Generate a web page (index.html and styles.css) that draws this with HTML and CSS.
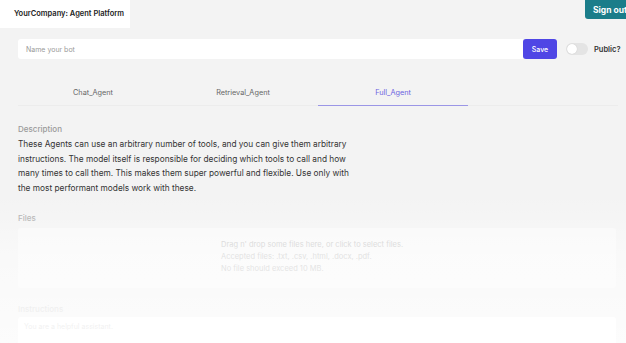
FILE: index.html
```html
<!DOCTYPE html>
<html>
<head>
<meta charset="utf-8">
<link rel="stylesheet" href="styles.css">
</head>
<body>
<div class="page">
  <header class="topbar">
    <div class="brand">YourCompany: Agent Platform</div>
    <button class="signout">Sign out</button>
  </header>
  <div class="namerow">
    <div class="namefield">
      <input class="nameinput" placeholder="Name your bot">
      <button class="save">Save</button>
    </div>
    <div class="toggle"><span class="knob"></span></div>
    <span class="public">Public?</span>
  </div>
  <nav class="tabs">
    <div class="tab">Chat_Agent</div>
    <div class="tab">Retrieval_Agent</div>
    <div class="tab active">Full_Agent</div>
  </nav>
  <section class="content">
    <div class="label">Description</div>
    <p class="desc">These Agents can use an arbitrary number of tools, and you can give them arbitrary instructions. The model itself is responsible for deciding which tools to call and how many times to call them. This makes them super powerful and flexible. Use only with the most performant models work with these.</p>
    <div class="label files-label">Files</div>
    <div class="dropzone">
      <div class="droptext">
        <div>Drag n' drop some files here, or click to select files.</div>
        <div>Accepted files: .txt, .csv, .html, .docx, .pdf.</div>
        <div>No file should exceed 10 MB.</div>
      </div>
    </div>
    <div class="label instr-label">Instructions</div>
    <div class="instructions">You are a helpful assistant.</div>
  </section>
  <div class="fade"></div>
</div>
</body>
</html>
```
FILE: styles.css
```css
* { box-sizing: border-box; }
html, body { margin: 0; padding: 0; }
body {
  background: #f3f3f3;
  font-family: Inter, "Liberation Sans", sans-serif;
  width: 626px;
  height: 343px;
  overflow: hidden;
}
.page { position: relative; height: 343px; overflow: hidden; }
.topbar {
  display: flex;
  justify-content: space-between;
  align-items: flex-start;
  height: 30px;
}
.brand {
  background: #fff;
  height: 28px;
  width: 130px;
  padding: 9px 0 0 14px;
  font-size: 7.5px;
  font-weight: 600;
  color: #222;
  white-space: nowrap;
}
.signout {
  background: #1b7d8a;
  color: #fff;
  border: none;
  font-family: inherit;
  font-weight: 700;
  font-size: 8.5px;
  height: 19px;
  width: 41px;
  padding: 0 0 0 8px;
  text-align: left;
  border-radius: 0 0 0 3px;
  white-space: nowrap;
  overflow: hidden;
}
.namerow {
  display: flex;
  align-items: center;
  margin-top: 9px;
  padding-left: 18px;
  height: 20px;
}
.namefield {
  display: flex;
  width: 539px;
  height: 20px;
}
.nameinput {
  flex: 1;
  border: none;
  background: #fff;
  border-radius: 3px 0 0 3px;
  font-family: inherit;
  font-size: 7px;
  padding: 0 0 0 8px;
  color: #333;
  outline: none;
}
.nameinput::placeholder { color: #9a9a9a; }
.save {
  width: 34px;
  background: #4f46e5;
  color: #fff;
  border: none;
  border-radius: 3px;
  font-family: inherit;
  font-size: 7px;
  font-weight: 500;
  padding: 0;
}
.toggle {
  margin-left: 9px;
  width: 22px;
  height: 12px;
  border-radius: 6px;
  background: #e4e4e4;
  display: flex;
  align-items: center;
  padding-left: 1px;
}
.knob {
  width: 10px;
  height: 10px;
  border-radius: 50%;
  background: #fff;
  box-shadow: 0 0 1px rgba(0,0,0,0.2);
}
.public {
  margin-left: 6px;
  font-size: 7.5px;
  font-weight: 600;
  color: #333;
}
.tabs {
  display: flex;
  margin: 21px 8px 0 18px;
  border-bottom: 1px solid #ececec;
}
.tab {
  width: 150px;
  height: 26px;
  text-align: center;
  font-size: 7.3px;
  color: #666;
  padding-top: 8px;
  border-bottom: 1px solid transparent;
  margin-bottom: -1px;
}
.tab.active {
  color: #6b63e0;
  border-bottom: 1.5px solid #9b96e6;
}
.content { padding: 18px 10px 0 18px; }
.label {
  font-size: 8px;
  color: #9a9a9a;
  font-weight: 500;
}
.desc {
  margin: 3px 0 0;
  width: 340px;
  font-size: 8.3px;
  line-height: 14.7px;
  color: #333;
}
.files-label { margin-top: 17px; color: #a8a8a8; }
.dropzone {
  margin-top: 5px;
  height: 60px;
  background: #f8f8f8;
  border-radius: 3px;
  padding: 11px 0 0 203px;
}
.droptext {
  font-size: 7.5px;
  line-height: 12px;
  color: #c4c4c4;
}
.instr-label { margin-top: 16px; color: #d2d2d2; }
.instructions {
  margin-top: 3px;
  background: #fff;
  height: 30px;
  border-radius: 3px;
  padding: 5px 0 0 6px;
  font-size: 7px;
  color: #cfcfcf;
}
.fade {
  position: absolute;
  left: 0; right: 0;
  top: 195px; bottom: 0;
  pointer-events: none;
  background: linear-gradient(to bottom, rgba(255,255,255,0) 0%, rgba(255,255,255,0.5) 40%, rgba(255,255,255,0.75) 100%);
}
```
